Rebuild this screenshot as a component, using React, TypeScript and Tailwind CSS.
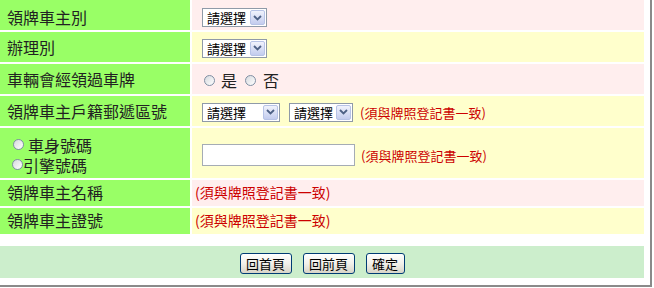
const Chevron = () => (
  <svg width="9" height="6" viewBox="0 0 9 6">
    <path d="M1 1l3.5 3.5L8 1" fill="none" stroke="#4d6185" strokeWidth="1.8" />
  </svg>
);

const Select = ({ className }: { className: string }) => (
  <div className={`flex h-[19px] shrink-0 items-center border border-[#8f9aa8] bg-white ${className}`}>
    <span className="flex-1 pl-[4px] text-[13px] leading-none text-black">請選擇</span>
    <span className="m-[1px] flex h-[15px] w-[15px] items-center justify-center rounded-[2px] border border-[#b7c3e6] bg-linear-to-b from-[#f1f3fc] to-[#c3ccee]">
      <Chevron />
    </span>
  </div>
);

const Radio = ({ className }: { className: string }) => (
  <span className={`inline-block h-[11px] w-[11px] shrink-0 rounded-full border border-[#7f8fa3] bg-linear-to-br from-[#d6d9de] to-white ${className}`} />
);

const Note = ({ className }: { className: string }) => (
  <span className={`leading-none text-[#cc0000] ${className}`}>(須與牌照登記書一致)</span>
);

const Btn = ({ label, className }: { label: string; className: string }) => (
  <button className={`flex h-[21px] items-center justify-center rounded-[3px] border border-[#003c74] bg-linear-to-b from-white via-[#f1f0ea] to-[#d8d4c8] text-[13px] leading-none text-black ${className}`}>
    {label}
  </button>
);

const label = 'flex w-[190px] shrink-0 items-center bg-[#99ff66] pl-[7px] text-[16px] text-[#222]';
const pink = 'flex flex-1 items-center bg-[#ffeeee] px-[3px]';
const yellow = 'flex flex-1 items-center bg-[#ffffcc] px-[3px]';

export default function App() {
  return (
    <div className="h-[287px] w-[652px] border-r-2 border-b-2 border-[#8a8a8a] bg-white font-['Noto_Sans_CJK_TC','Liberation_Sans',sans-serif]">
      <div className="flex w-[644px] flex-col gap-[2px]">
        <div className="flex h-[30px] gap-[2px]">
          <div className={`${label} pt-[3px] leading-none`}>領牌車主別</div>
          <div className={`${pink} pt-[5px]`}>
            <Select className="ml-[7px] w-[65px]" />
          </div>
        </div>
        <div className="flex h-[30px] gap-[2px]">
          <div className={`${label} leading-none`}>辦理別</div>
          <div className={`${yellow} pt-[2px]`}>
            <Select className="ml-[7px] w-[65px]" />
          </div>
        </div>
        <div className="flex h-[30px] gap-[2px]">
          <div className={`${label} leading-none`}>車輛會經領過車牌</div>
          <div className={`${pink} pt-[2px] text-[16px] leading-none text-[#222]`}>
            <Radio className="ml-[9px] mr-[6px]" />
            <span>是</span>
            <Radio className="ml-[8px] mr-[7px]" />
            <span>否</span>
          </div>
        </div>
        <div className="flex h-[30px] gap-[2px]">
          <div className={`${label} leading-none`}>領牌車主戶籍郵遞區號</div>
          <div className={`${yellow} pt-[2px]`}>
            <Select className="ml-[7px] w-[78px]" />
            <Select className="ml-[9px] w-[64px]" />
            <Note className="ml-[7px] text-[13px]" />
          </div>
        </div>
        <div className="flex h-[50px] gap-[2px]">
          <div className="flex w-[190px] shrink-0 flex-col justify-center bg-[#99ff66] pl-[7px] pt-[3px] text-[16px] text-[#222]">
            <div className="flex h-[20px] items-center leading-none">
              <Radio className="ml-[6px] mr-[4px]" />
              <span>車身號碼</span>
            </div>
            <div className="flex h-[20px] items-center leading-none">
              <Radio className="ml-[5px]" />
              <span>引擎號碼</span>
            </div>
          </div>
          <div className={`${yellow} pt-[4px]`}>
            <div className="ml-[7px] h-[22px] w-[153px] shrink-0 border border-[#a5acb5] bg-white" />
            <Note className="ml-[6px] text-[13px]" />
          </div>
        </div>
        <div className="flex h-[26px] gap-[2px]">
          <div className={`${label} pb-[3px] leading-none`}>領牌車主名稱</div>
          <div className={`${pink} pb-[3px]`}>
            <Note className="text-[14px]" />
          </div>
        </div>
        <div className="flex h-[26px] gap-[2px]">
          <div className={`${label} pb-[2px] leading-none`}>領牌車主證號</div>
          <div className={`${yellow} pb-[2px]`}>
            <Note className="text-[14px]" />
          </div>
        </div>
      </div>
      <div className="mt-[12px] flex h-[32px] w-[644px] items-center justify-center gap-[11px] bg-[#cceecc] pt-[2px]">
        <Btn label="回首頁" className="w-[52px]" />
        <Btn label="回前頁" className="w-[52px]" />
        <Btn label="確定" className="w-[39px]" />
      </div>
    </div>
  );
}
